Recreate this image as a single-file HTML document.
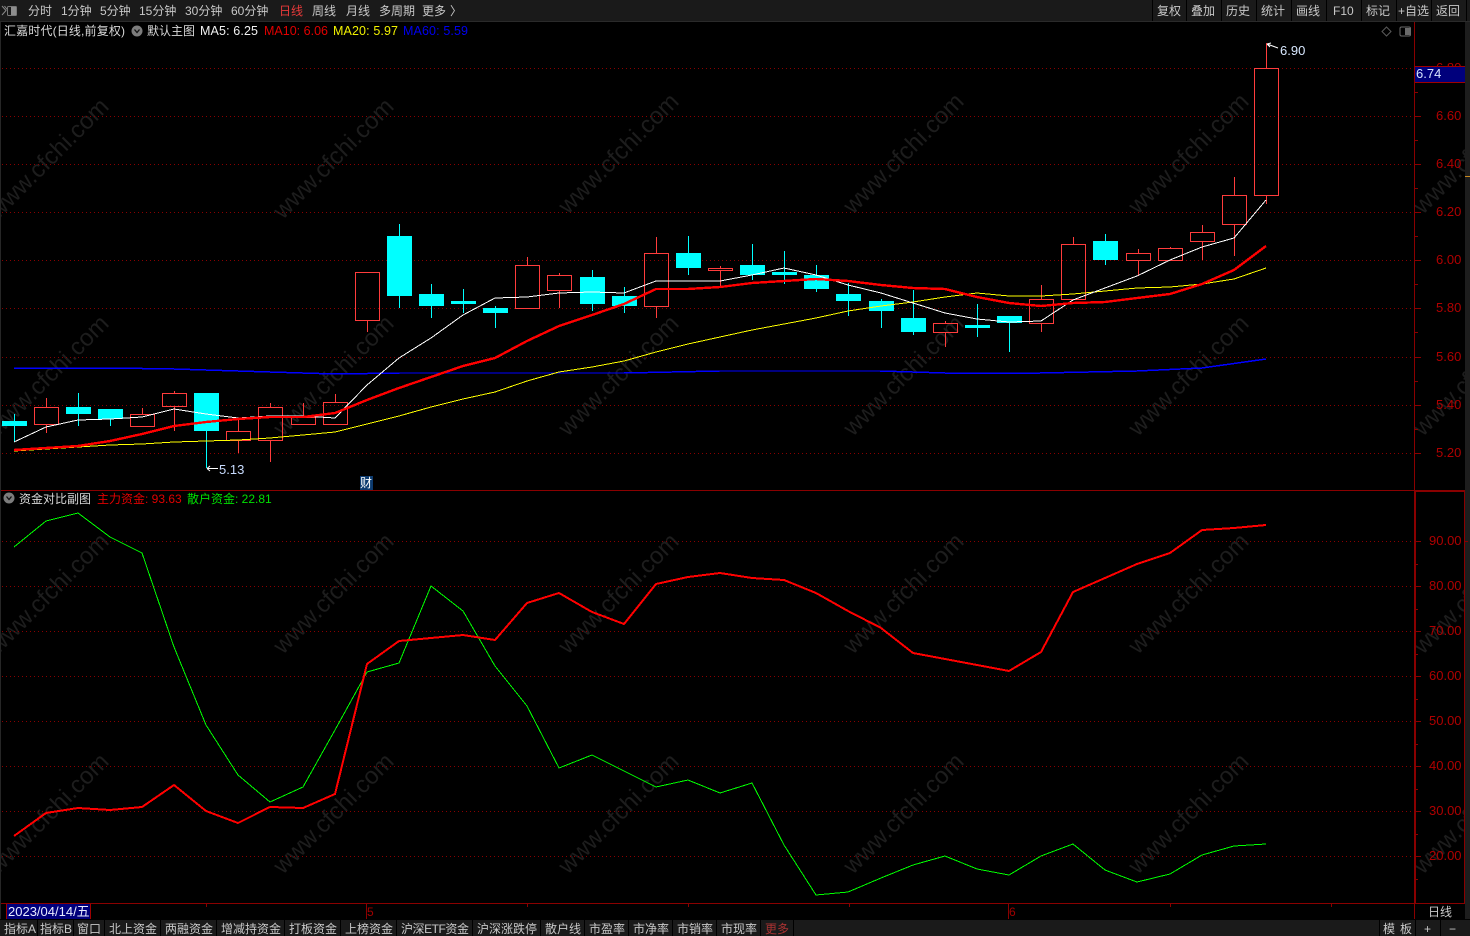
<!DOCTYPE html>
<html><head><meta charset="utf-8"><title>汇嘉时代</title>
<style>
html,body{margin:0;padding:0;background:#000;width:1470px;height:936px;overflow:hidden}
svg{display:block;position:absolute;left:0;top:0}
text{font-family:"Liberation Sans","Noto Sans CJK SC",sans-serif;font-size:12px;fill:#c8c8c8}
.wm text{font-size:24px;fill:#1d1d1d;text-anchor:middle}
.ax text{font-size:13px;fill:#b00000}
.info text{font-size:12.5px}
.g line{stroke:#8a0000;stroke-width:1;stroke-dasharray:1 3}
.t line{stroke:#8a0000;stroke-width:1}
.r line{stroke:#ff3c3c}
.r rect{fill:none;stroke:#ff3c3c}
.c line{stroke:#00ffff}
.c rect{fill:#00ffff}
</style></head><body>
<svg width="1470" height="936" viewBox="0 0 1470 936" xmlns="http://www.w3.org/2000/svg">
<rect width="1470" height="936" fill="#000"/>

<g class="wm">
<text transform="translate(54,164) rotate(-45)">www.cfchi.com</text>
<text transform="translate(339,164) rotate(-45)">www.cfchi.com</text>
<text transform="translate(624,159) rotate(-45)">www.cfchi.com</text>
<text transform="translate(909,159) rotate(-45)">www.cfchi.com</text>
<text transform="translate(1194,159) rotate(-45)">www.cfchi.com</text>
<text transform="translate(1479,159) rotate(-45)">www.cfchi.com</text>
<text transform="translate(54,381) rotate(-45)">www.cfchi.com</text>
<text transform="translate(339,381) rotate(-45)">www.cfchi.com</text>
<text transform="translate(624,381) rotate(-45)">www.cfchi.com</text>
<text transform="translate(909,381) rotate(-45)">www.cfchi.com</text>
<text transform="translate(1194,381) rotate(-45)">www.cfchi.com</text>
<text transform="translate(1479,381) rotate(-45)">www.cfchi.com</text>
<text transform="translate(54,599) rotate(-45)">www.cfchi.com</text>
<text transform="translate(339,599) rotate(-45)">www.cfchi.com</text>
<text transform="translate(624,599) rotate(-45)">www.cfchi.com</text>
<text transform="translate(909,599) rotate(-45)">www.cfchi.com</text>
<text transform="translate(1194,599) rotate(-45)">www.cfchi.com</text>
<text transform="translate(1479,599) rotate(-45)">www.cfchi.com</text>
<text transform="translate(54,819) rotate(-45)">www.cfchi.com</text>
<text transform="translate(339,819) rotate(-45)">www.cfchi.com</text>
<text transform="translate(624,819) rotate(-45)">www.cfchi.com</text>
<text transform="translate(909,819) rotate(-45)">www.cfchi.com</text>
<text transform="translate(1194,819) rotate(-45)">www.cfchi.com</text>
<text transform="translate(1479,819) rotate(-45)">www.cfchi.com</text>
</g>

<!-- grid -->
<g class="g" shape-rendering="crispEdges">
<line x1="2" y1="68.5" x2="1415" y2="68.5"/>
<line x1="2" y1="116.5" x2="1415" y2="116.5"/>
<line x1="2" y1="164.5" x2="1415" y2="164.5"/>
<line x1="2" y1="212.5" x2="1415" y2="212.5"/>
<line x1="2" y1="260.5" x2="1415" y2="260.5"/>
<line x1="2" y1="308.5" x2="1415" y2="308.5"/>
<line x1="2" y1="357.5" x2="1415" y2="357.5"/>
<line x1="2" y1="405.5" x2="1415" y2="405.5"/>
<line x1="2" y1="453.5" x2="1415" y2="453.5"/>
<line x1="2" y1="541.5" x2="1415" y2="541.5"/>
<line x1="2" y1="586.5" x2="1415" y2="586.5"/>
<line x1="2" y1="631.5" x2="1415" y2="631.5"/>
<line x1="2" y1="676.5" x2="1415" y2="676.5"/>
<line x1="2" y1="721.5" x2="1415" y2="721.5"/>
<line x1="2" y1="766.5" x2="1415" y2="766.5"/>
<line x1="2" y1="811.5" x2="1415" y2="811.5"/>
<line x1="2" y1="856.5" x2="1415" y2="856.5"/>
</g>

<!-- frame -->
<rect x="0" y="21" width="1" height="899" fill="#262626"/>
<g class="t" shape-rendering="crispEdges">
<line x1="1" y1="490.5" x2="1465" y2="490.5"/>
<line x1="1" y1="903.5" x2="1465" y2="903.5"/>
<line x1="1414.5" y1="21" x2="1414.5" y2="920"/>
<line x1="1415.5" y1="491" x2="1415.5" y2="903"/>
<line x1="1415" y1="491.5" x2="1465" y2="491.5"/>
<line x1="1464.5" y1="491" x2="1464.5" y2="903"/>
<line x1="1415" y1="68.5" x2="1421" y2="68.5"/><line x1="1415" y1="116.5" x2="1421" y2="116.5"/><line x1="1415" y1="164.5" x2="1421" y2="164.5"/><line x1="1415" y1="212.5" x2="1421" y2="212.5"/><line x1="1415" y1="260.5" x2="1421" y2="260.5"/><line x1="1415" y1="308.5" x2="1421" y2="308.5"/><line x1="1415" y1="357.5" x2="1421" y2="357.5"/><line x1="1415" y1="405.5" x2="1421" y2="405.5"/><line x1="1415" y1="453.5" x2="1421" y2="453.5"/>
<line x1="1415" y1="92.5" x2="1418" y2="92.5"/><line x1="1415" y1="140.5" x2="1418" y2="140.5"/><line x1="1415" y1="188.5" x2="1418" y2="188.5"/><line x1="1415" y1="236.5" x2="1418" y2="236.5"/><line x1="1415" y1="284.5" x2="1418" y2="284.5"/><line x1="1415" y1="332.5" x2="1418" y2="332.5"/><line x1="1415" y1="381.5" x2="1418" y2="381.5"/><line x1="1415" y1="429.5" x2="1418" y2="429.5"/>
<line x1="1415" y1="541.5" x2="1421" y2="541.5"/><line x1="1415" y1="586.5" x2="1421" y2="586.5"/><line x1="1415" y1="631.5" x2="1421" y2="631.5"/><line x1="1415" y1="676.5" x2="1421" y2="676.5"/><line x1="1415" y1="721.5" x2="1421" y2="721.5"/><line x1="1415" y1="766.5" x2="1421" y2="766.5"/><line x1="1415" y1="811.5" x2="1421" y2="811.5"/><line x1="1415" y1="856.5" x2="1421" y2="856.5"/>
<line x1="1415" y1="564.5" x2="1418" y2="564.5"/><line x1="1415" y1="609.5" x2="1418" y2="609.5"/><line x1="1415" y1="654.5" x2="1418" y2="654.5"/><line x1="1415" y1="699.5" x2="1418" y2="699.5"/><line x1="1415" y1="744.5" x2="1418" y2="744.5"/><line x1="1415" y1="789.5" x2="1418" y2="789.5"/><line x1="1415" y1="834.5" x2="1418" y2="834.5"/><line x1="1415" y1="879.5" x2="1418" y2="879.5"/>
<line x1="366.5" y1="904" x2="366.5" y2="919"/>
<line x1="1008.5" y1="904" x2="1008.5" y2="919"/>
<line x1="527.5" y1="904" x2="527.5" y2="907"/><line x1="688.5" y1="904" x2="688.5" y2="907"/><line x1="849.5" y1="904" x2="849.5" y2="907"/><line x1="1170.5" y1="904" x2="1170.5" y2="907"/><line x1="1331.5" y1="904" x2="1331.5" y2="907"/><line x1="46.5" y1="904" x2="46.5" y2="907"/><line x1="206.5" y1="904" x2="206.5" y2="907"/>
</g>
<rect x="1465" y="21" width="5" height="915" fill="#1d1d1d"/>

<!-- blue MA60 -->
<polyline points="14,368 110,368 174,369 270,372 335,374 400,373 624,373 720,371 880,371 945,373 1040,373 1137,371 1202,368 1266,359" fill="none" stroke="#0000ff" stroke-width="1.5" shape-rendering="crispEdges"/>

<!-- red candles -->
<g class="r" shape-rendering="crispEdges">
<line x1="46.5" y1="398" x2="46.5" y2="407"/><line x1="46.5" y1="425" x2="46.5" y2="433"/><rect x="34.5" y="407.5" width="24" height="17"/>
<line x1="142.5" y1="408" x2="142.5" y2="414"/><rect x="130.5" y="414.5" width="24" height="12"/>
<line x1="174.5" y1="391" x2="174.5" y2="393"/><line x1="174.5" y1="407" x2="174.5" y2="431"/><rect x="162.5" y="393.5" width="24" height="13"/>
<line x1="238.5" y1="418" x2="238.5" y2="431"/><line x1="238.5" y1="441" x2="238.5" y2="453"/><rect x="226.5" y="431.5" width="24" height="9"/>
<line x1="270.5" y1="403" x2="270.5" y2="407"/><line x1="270.5" y1="441" x2="270.5" y2="462"/><rect x="258.5" y="407.5" width="24" height="33"/>
<line x1="303.5" y1="403" x2="303.5" y2="417"/><rect x="291.5" y="417.5" width="24" height="7"/>
<line x1="335.5" y1="394" x2="335.5" y2="402"/><rect x="323.5" y="402.5" width="24" height="22"/>
<line x1="367.5" y1="320" x2="367.5" y2="332"/><rect x="355.5" y="272.5" width="24" height="48"/>
<line x1="527.5" y1="257" x2="527.5" y2="265"/><rect x="515.5" y="265.5" width="24" height="43"/>
<line x1="559.5" y1="273" x2="559.5" y2="275"/><line x1="559.5" y1="290" x2="559.5" y2="308"/><rect x="547.5" y="275.5" width="24" height="15"/>
<line x1="656.5" y1="237" x2="656.5" y2="253"/><line x1="656.5" y1="307" x2="656.5" y2="318"/><rect x="644.5" y="253.5" width="24" height="53"/>
<line x1="720.5" y1="266" x2="720.5" y2="268"/><line x1="720.5" y1="271" x2="720.5" y2="286"/><rect x="708.5" y="268.5" width="24" height="2"/>
<line x1="945.5" y1="321" x2="945.5" y2="323"/><line x1="945.5" y1="333" x2="945.5" y2="347"/><rect x="933.5" y="323.5" width="24" height="9"/>
<line x1="1041.5" y1="285" x2="1041.5" y2="299"/><line x1="1041.5" y1="324" x2="1041.5" y2="332"/><rect x="1029.5" y="299.5" width="24" height="24"/>
<line x1="1073.5" y1="237" x2="1073.5" y2="244"/><rect x="1061.5" y="244.5" width="24" height="55"/>
<line x1="1138.5" y1="249" x2="1138.5" y2="253"/><line x1="1138.5" y1="261" x2="1138.5" y2="276"/><rect x="1126.5" y="253.5" width="24" height="7"/>
<line x1="1170.5" y1="247" x2="1170.5" y2="248"/><rect x="1158.5" y="248.5" width="24" height="12"/>
<line x1="1202.5" y1="225" x2="1202.5" y2="232"/><line x1="1202.5" y1="242" x2="1202.5" y2="260"/><rect x="1190.5" y="232.5" width="24" height="9"/>
<line x1="1234.5" y1="177" x2="1234.5" y2="195"/><line x1="1234.5" y1="224" x2="1234.5" y2="256"/><rect x="1222.5" y="195.5" width="24" height="29"/>
<line x1="1266.5" y1="43" x2="1266.5" y2="68"/><line x1="1266.5" y1="195" x2="1266.5" y2="204"/><rect x="1254.5" y="68.5" width="24" height="127"/>
</g>

<!-- cyan candles -->
<g class="c" shape-rendering="crispEdges">
<line x1="14.5" y1="414" x2="14.5" y2="442"/><rect x="2" y="421" width="25" height="5"/>
<line x1="78.5" y1="393" x2="78.5" y2="426"/><rect x="66" y="407" width="25" height="7"/>
<line x1="110.5" y1="409" x2="110.5" y2="426"/><rect x="98" y="409" width="25" height="10"/>
<line x1="206.5" y1="393" x2="206.5" y2="468"/><rect x="194" y="393" width="25" height="38"/>
<line x1="399.5" y1="224" x2="399.5" y2="308"/><rect x="387" y="236" width="25" height="60"/>
<line x1="431.5" y1="284" x2="431.5" y2="318"/><rect x="419" y="294" width="25" height="12"/>
<line x1="463.5" y1="289" x2="463.5" y2="313"/><rect x="451" y="301" width="25" height="3"/>
<line x1="495.5" y1="306" x2="495.5" y2="328"/><rect x="483" y="308" width="25" height="5"/>
<line x1="592.5" y1="270" x2="592.5" y2="311"/><rect x="580" y="277" width="25" height="27"/>
<line x1="624.5" y1="287" x2="624.5" y2="313"/><rect x="612" y="296" width="25" height="10"/>
<line x1="688.5" y1="236" x2="688.5" y2="275"/><rect x="676" y="253" width="25" height="15"/>
<line x1="752.5" y1="244" x2="752.5" y2="280"/><rect x="740" y="265" width="25" height="10"/>
<line x1="784.5" y1="251" x2="784.5" y2="284"/><rect x="772" y="272" width="25" height="3"/>
<line x1="816.5" y1="265" x2="816.5" y2="292"/><rect x="804" y="275" width="25" height="14"/>
<line x1="848.5" y1="283" x2="848.5" y2="316"/><rect x="836" y="294" width="25" height="7"/>
<line x1="881.5" y1="299" x2="881.5" y2="328"/><rect x="869" y="301" width="25" height="10"/>
<line x1="913.5" y1="290" x2="913.5" y2="335"/><rect x="901" y="318" width="25" height="14"/>
<line x1="977.5" y1="304" x2="977.5" y2="337"/><rect x="965" y="325" width="25" height="3"/>
<line x1="1009.5" y1="316" x2="1009.5" y2="352"/><rect x="997" y="316" width="25" height="7"/>
<line x1="1105.5" y1="234" x2="1105.5" y2="265"/><rect x="1093" y="241" width="25" height="19"/>
</g>

<!-- MA lines -->
<polyline points="14,451 46,449 78,447 110,445 142,444 174,442 206,441 238,440 270,438 303,435 335,432 367,424 399,416 431,407 463,399 495,392 527,381 559,372 592,367 624,361 656,352 688,344 720,337 752,330 784,324 816,318 848,311 881,306 913,302 945,297 977,293 1009,296 1041,296 1073,294 1105,291 1137,288 1170,287 1202,284 1234,279 1266,268" fill="none" stroke="#ffff00" stroke-width="1" shape-rendering="crispEdges"/>
<polyline points="14,442 46,427 78,420 110,419 142,417 174,409 206,414 238,418 270,416 303,416 335,418 367,385 399,358 431,338 463,315 495,298 527,297 559,293 592,292 624,293 656,281 688,281 720,281 752,275 784,268 816,275 848,285 881,293 913,303 945,313 977,319 1009,322 1041,321 1073,300 1105,288 1137,276 1170,260 1202,247 1234,238 1266,200" fill="none" stroke="#ffffff" stroke-width="1" shape-rendering="crispEdges"/>
<polyline points="14,450 46,448 78,446 110,441 142,434 174,426 206,422 238,419 270,417 303,417 335,413 367,400 399,388 431,377 463,366 495,358 527,341 559,326 592,315 624,304 656,289 688,289 720,287 752,283 784,281 816,279 848,281 881,285 913,288 945,289 977,297 1009,303 1041,306 1073,303 1105,302 1137,298 1170,294 1202,284 1234,270 1266,246" fill="none" stroke="#ff0000" stroke-width="2.4" shape-rendering="crispEdges"/>

<!-- sub chart lines -->
<polyline points="14,547 46,521 78,513 110,537 142,553 174,647 206,725 238,775 270,802 303,787 335,730 367,672 399,663 431,586 463,611 495,666 527,706 559,768 592,755 624,771 656,787 688,780 720,793 752,783 784,845 816,895 848,892 881,878 913,865 945,856 977,869 1009,875 1041,856 1073,844 1105,870 1137,882 1170,874 1202,855 1234,846 1266,844" fill="none" stroke="#00ff00" stroke-width="1" shape-rendering="crispEdges"/>
<polyline points="14,836 46,813 78,808 110,810 142,807 174,785 206,811 238,823 270,807 303,808 335,794 367,664 399,641 431,638 463,635 495,640 527,603 559,593 592,612 624,624 656,584 688,577 720,573 752,578 784,580 816,593 848,611 881,628 913,653 945,659 977,665 1009,671 1041,652 1073,592 1105,578 1137,564 1170,553 1202,530 1234,528 1266,525" fill="none" stroke="#ff0000" stroke-width="2" shape-rendering="crispEdges"/>

<!-- price annotations -->
<path d="M207 468.5H218M207 468.5L210 466M207 468.5L210 471" stroke="#fff" fill="none" stroke-width="1"/>
<text x="219" y="474" style="font-size:13px;fill:#c8dcff">5.13</text>
<path d="M1267 44L1278 48M1267 44L1271 43M1267 44L1270 47" stroke="#fff" fill="none" stroke-width="1"/>
<text x="1280" y="55" style="font-size:13px;fill:#d8e8ff">6.90</text>
<rect x="360" y="476" width="13" height="14" fill="#0c3a6e"/>
<text x="360" y="487" style="font-size:12px;fill:#fff">财</text>

<!-- axis labels -->
<g class="ax">
<text x="1436" y="72">6.80</text>
<text x="1436" y="120">6.60</text>
<text x="1436" y="168">6.40</text>
<text x="1436" y="216">6.20</text>
<text x="1436" y="264">6.00</text>
<text x="1436" y="312">5.80</text>
<text x="1436" y="361">5.60</text>
<text x="1436" y="409">5.40</text>
<text x="1436" y="457">5.20</text>
<text x="1429" y="545">90.00</text>
<text x="1429" y="590">80.00</text>
<text x="1429" y="635">70.00</text>
<text x="1429" y="680">60.00</text>
<text x="1429" y="725">50.00</text>
<text x="1429" y="770">40.00</text>
<text x="1429" y="815">30.00</text>
<text x="1429" y="860">20.00</text>
</g>
<rect x="1415" y="66" width="50" height="17" fill="#00007c"/>
<rect x="1415" y="66" width="50" height="1" fill="#a00000"/>
<rect x="1415" y="82" width="50" height="1" fill="#a00000"/>
<text x="1416" y="78" style="font-size:13px;fill:#d8e4ff">6.74</text>
<rect x="1465" y="176" width="5" height="1" fill="#c88a20"/>
<rect x="1465" y="541" width="3" height="1" fill="#8a0000"/>

<!-- top bar -->
<rect x="0" y="0" width="1470" height="21" fill="#1a1a1a"/>
<rect x="0" y="21" width="1470" height="1" fill="#2a2a2a"/>
<path d="M2 6L6 10.500L2 15M4.500 6L8 10.500" stroke="#8a8a8a" fill="none" stroke-width="1"/>
<rect x="7.500" y="6.500" width="9" height="9" rx="1" fill="#1a1a1a" stroke="#777"/>
<rect x="11" y="7" width="5" height="8" fill="#8e8e8e"/>
<text x="28" y="15">分时</text>
<text x="61" y="15">1分钟</text>
<text x="100" y="15">5分钟</text>
<text x="139" y="15">15分钟</text>
<text x="185" y="15">30分钟</text>
<text x="231" y="15">60分钟</text>
<text x="279" y="15" style="fill:#e83a3a">日线</text>
<text x="312" y="15">周线</text>
<text x="346" y="15">月线</text>
<text x="379" y="15">多周期</text>
<text x="422" y="15">更多</text>
<text x="450" y="15">〉</text>
<rect x="1152" y="0" width="1" height="21" fill="#000"/><rect x="1186" y="0" width="1" height="21" fill="#000"/><rect x="1221" y="0" width="1" height="21" fill="#000"/><rect x="1256" y="0" width="1" height="21" fill="#000"/><rect x="1291" y="0" width="1" height="21" fill="#000"/><rect x="1326" y="0" width="1" height="21" fill="#000"/><rect x="1361" y="0" width="1" height="21" fill="#000"/><rect x="1396" y="0" width="1" height="21" fill="#000"/><rect x="1431" y="0" width="1" height="21" fill="#000"/><rect x="1466" y="0" width="1" height="21" fill="#000"/>
<text x="1157" y="15">复权</text>
<text x="1191" y="15">叠加</text>
<text x="1226" y="15">历史</text>
<text x="1261" y="15">统计</text>
<text x="1296" y="15">画线</text>
<text x="1333" y="15">F10</text>
<text x="1366" y="15">标记</text>
<text x="1398" y="15">+自选</text>
<text x="1436" y="15">返回</text>

<!-- info line -->
<g class="info">
<text x="4" y="35" textLength="121" style="font-size:12px;fill:#d8d8d8">汇嘉时代(日线,前复权)</text>
<circle cx="137" cy="31" r="5.500" fill="#7c7c7c"/>
<path d="M134.500 29.500L137 32.500L139.500 29.500" stroke="#111" fill="none" stroke-width="1.300"/>
<text x="147" y="35" style="font-size:12px;fill:#d8d8d8">默认主图</text>
<text x="200" y="35" textLength="58" style="fill:#f0f0f0">MA5: 6.25</text>
<text x="264" y="35" textLength="64" style="fill:#e00000">MA10: 6.06</text>
<text x="333" y="35" textLength="65" style="fill:#f0f000">MA20: 5.97</text>
<text x="403" y="35" textLength="65" style="fill:#0000f0">MA60: 5.59</text>
</g>
<path d="M1386.500 27L1391 31.500L1386.500 36L1382 31.500Z" fill="none" stroke="#5a5a5a"/>
<rect x="1400" y="27" width="10.500" height="9" rx="1.500" fill="none" stroke="#6a6a6a"/>
<rect x="1405" y="28" width="5" height="7" fill="#6a6a6a"/>

<!-- sub chart title -->
<circle cx="9" cy="498" r="5.500" fill="#7c7c7c"/>
<path d="M6.500 496.500L9 499.500L11.500 496.500" stroke="#111" fill="none" stroke-width="1.300"/>
<text x="19" y="503" style="font-size:12px;fill:#d8d8d8">资金对比副图</text>
<text x="97" y="503" style="font-size:12px;fill:#e00000">主力资金: 93.63</text>
<text x="187" y="503" style="font-size:12px;fill:#00e000">散户资金: 22.81</text>

<!-- date strip -->
<rect x="7" y="904" width="83" height="15" fill="#00007c"/>
<rect x="6" y="904" width="1" height="15" fill="#a00000"/>
<rect x="90" y="904" width="1" height="15" fill="#a00000"/>
<text x="8" y="916" style="font-size:13px;fill:#e8ecff">2023/04/14/五</text>
<text x="367" y="916" style="font-size:12px;fill:#a00000">5</text>
<text x="1009" y="916" style="font-size:12px;fill:#a00000">6</text>
<text x="1428" y="916" style="fill:#c8c8c8">日线</text>

<!-- bottom tabs -->
<rect x="0" y="920" width="1470" height="16" fill="#1a1a1a"/>
<rect x="0" y="919" width="1470" height="1" fill="#000"/>
<g fill="#000">
<rect x="37" y="920" width="1" height="16"/><rect x="73" y="920" width="1" height="16"/><rect x="104" y="920" width="1" height="16"/><rect x="160" y="920" width="1" height="16"/><rect x="216" y="920" width="1" height="16"/><rect x="284" y="920" width="1" height="16"/><rect x="340" y="920" width="1" height="16"/><rect x="396" y="920" width="1" height="16"/><rect x="472" y="920" width="1" height="16"/><rect x="540" y="920" width="1" height="16"/><rect x="584" y="920" width="1" height="16"/><rect x="628" y="920" width="1" height="16"/><rect x="672" y="920" width="1" height="16"/><rect x="716" y="920" width="1" height="16"/><rect x="760" y="920" width="1" height="16"/><rect x="793" y="920" width="1" height="16"/><rect x="1379" y="920" width="1" height="16"/><rect x="1415" y="920" width="1" height="16"/><rect x="1440" y="920" width="1" height="16"/>
</g>
<text x="4" y="933">指标A</text>
<text x="40" y="933">指标B</text>
<text x="77" y="933">窗口</text>
<text x="109" y="933">北上资金</text>
<text x="165" y="933">两融资金</text>
<text x="221" y="933">增减持资金</text>
<text x="289" y="933">打板资金</text>
<text x="345" y="933">上榜资金</text>
<text x="401" y="933" textLength="68">沪深ETF资金</text>
<text x="477" y="933">沪深涨跌停</text>
<text x="545" y="933">散户线</text>
<text x="589" y="933">市盈率</text>
<text x="633" y="933">市净率</text>
<text x="677" y="933">市销率</text>
<text x="721" y="933">市现率</text>
<text x="765" y="933" style="fill:#a83232">更多</text>
<text x="1383" y="933">模</text>
<text x="1400" y="933">板</text>
<text x="1424" y="933">+</text>
<text x="1449" y="933">−</text>
</svg>
</body></html>
